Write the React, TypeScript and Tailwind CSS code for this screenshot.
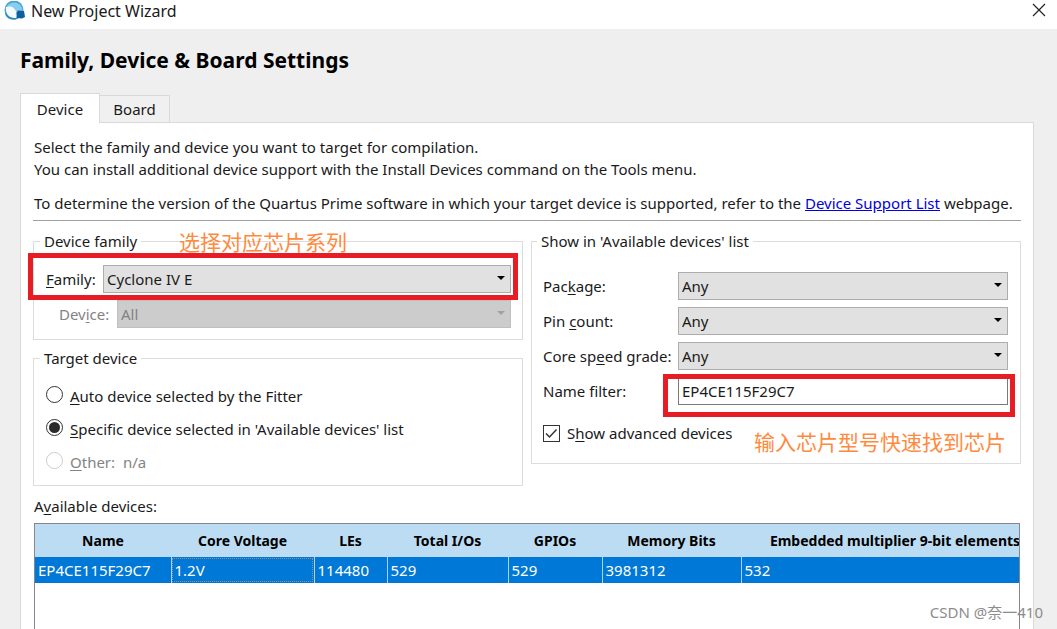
import { ReactNode, useState } from "react";

interface deviceType {
  name: string;
  voltage: string;
  les: string;
  ios: string;
  gpios: string;
  memory: string;
  multipliers: string;
}

interface selectBoxProps {
  id: string;
  value: string;
  disabled?: boolean;
}

interface radioProps {
  value: string;
  selected: string;
  onSelect: (value: string) => void;
  disabled?: boolean;
  children: ReactNode;
}

const devices: deviceType[] = [
  {
    name: "EP4CE115F29C7",
    voltage: "1.2V",
    les: "114480",
    ios: "529",
    gpios: "529",
    memory: "3981312",
    multipliers: "532",
  },
];

const columns: { key: keyof deviceType; title: string; width: string }[] = [
  { key: "name", title: "Name", width: "w-[136px]" },
  { key: "voltage", title: "Core Voltage", width: "w-[143px]" },
  { key: "les", title: "LEs", width: "w-[73px]" },
  { key: "ios", title: "Total I/Os", width: "w-[121px]" },
  { key: "gpios", title: "GPIOs", width: "w-[94px]" },
  { key: "memory", title: "Memory Bits", width: "w-[139px]" },
  {
    key: "multipliers",
    title: "Embedded multiplier 9-bit elements",
    width: "w-[308px]",
  },
];

/* Underlined shortcut letter */
const Key = ({ children }: { children: ReactNode }) => (
  <span className="underline underline-offset-2">{children}</span>
);

const SelectBox = ({ id, value, disabled }: selectBoxProps) => (
  <div className="relative min-w-0 flex-1">
    <select
      id={id}
      disabled={disabled}
      className="block h-7 w-full appearance-none border border-[#adadad] bg-[#e1e1e1] px-[3px] text-[#1a1a1a] disabled:border-[#bfbfbf] disabled:bg-[#cccccc] disabled:text-[#838383] disabled:opacity-100"
    >
      <option>{value}</option>
    </select>
    <svg
      viewBox="0 0 8 4"
      className={`pointer-events-none absolute right-[6px] top-[11px] h-1 w-2 ${
        disabled ? "fill-[#a0a0a0]" : "fill-black"
      }`}
    >
      <path d="M0 0h8L4 4z" />
    </svg>
  </div>
);

const Radio = ({
  value,
  selected,
  onSelect,
  disabled,
  children,
}: radioProps) => (
  <label
    className={`flex h-[33px] items-center gap-[7px] ${
      disabled ? "text-[#838383]" : ""
    }`}
  >
    <input
      type="radio"
      name="target"
      checked={selected === value}
      onChange={() => onSelect(value)}
      disabled={disabled}
      className="mb-[2px] size-[17px] shrink-0 appearance-none rounded-full border border-[#333333] bg-white p-[2px] bg-clip-content checked:bg-[#2b2b2b] disabled:border-[#cccccc]"
    />
    <span>{children}</span>
  </label>
);

const DeviceTable = () => (
  <div className="mt-[6px] flex-1 overflow-hidden border border-b-0 border-[#828790] bg-white">
    <table className="w-[1014px] table-fixed border-collapse">
      <thead>
        <tr className="h-[33px] bg-[#bcdcf4] text-black">
          {columns.map((column) => (
            <th
              key={column.key}
              className={`${column.width} p-0 text-center text-[14px] font-bold whitespace-nowrap`}
            >
              {column.title}
            </th>
          ))}
        </tr>
      </thead>
      <tbody>
        {devices.map((device) => (
          <tr key={device.name} className="h-[26px] bg-[#0078d7] text-white">
            {columns.map((column) => (
              <td
                key={column.key}
                className={`border-r border-[#a9d3f5] py-0 pr-0 pl-[3px] whitespace-nowrap ${
                  column.key === "voltage"
                    ? "outline-1 -outline-offset-2 outline-dotted outline-[#9c8f80]"
                    : ""
                }`}
              >
                {device[column.key]}
              </td>
            ))}
          </tr>
        ))}
      </tbody>
    </table>
  </div>
);

const App = () => {
  const [target, setTarget] = useState("specific");
  const [filter, setFilter] = useState("EP4CE115F29C7");
  const [advanced, setAdvanced] = useState(true);

  return (
    <div className="relative flex min-h-screen flex-col overflow-hidden bg-[#efefef] font-['Noto_Sans','Noto_Sans_CJK_SC',sans-serif] text-[15px] leading-[22px] text-[#1a1a1a]">
      {/* Title bar */}
      <header className="flex h-[29px] items-start justify-between bg-white pr-[11px] pl-1">
        <div className="flex items-center gap-[6px]">
          <svg viewBox="0 0 21 20" className="h-5 w-[21px]">
            <circle cx="10" cy="9" r="9.5" fill="#4aa3d4" />
            <path d="M3 5C6 1 13 0 17 5c1 2 2 4 1 6l-5 1C11 7 8 5 3 5z" fill="#86cdee" />
            <path d="M2 6c4-2 8 0 10 4 1 2 1 5 0 7C6 18 1 13 2 6z" fill="#f4fbff" />
            <path d="M1 11c2 5 6 6 11 6l1 1C7 20 1 17 1 11z" fill="#2c86bd" />
            <path d="M14 9.500l6 .5 1 6-3 1.500-5-.5-.5-5z" fill="#0d5f9e" />
          </svg>
          <span className="text-[16px]">New Project Wizard</span>
        </div>
        <button aria-label="Close" className="mt-[3px]">
          <svg viewBox="0 0 14 14" className="size-[14px] stroke-[#222222]">
            <path d="M1 1l12 12M13 1L1 13" fill="none" strokeWidth="1.2" />
          </svg>
        </button>
      </header>

      <main className="flex flex-1 flex-col pr-[23px] pl-5">
        <h1 className="mt-4 text-[21px] leading-[30px] font-bold text-black">
          Family, Device &amp; Board Settings
        </h1>

        <div role="tablist" className="mt-[18px] flex h-[29px] items-end">
          <button
            role="tab"
            aria-selected="true"
            className="relative z-10 -mb-px h-[30px] w-20 border border-b-0 border-[#d9d9d9] bg-white"
          >
            Device
          </button>
          <button
            role="tab"
            aria-selected="false"
            className="h-[27px] w-[70px] border border-b-0 border-l-0 border-[#d9d9d9] bg-[#f0f0f0]"
          >
            Board
          </button>
        </div>

        <section className="flex flex-1 flex-col border border-b-0 border-[#d9d9d9] bg-white px-3 pt-[13px]">
          <div className="pl-px whitespace-nowrap">
            <p>Select the family and device you want to target for compilation.</p>
            <p>
              You can install additional device support with the Install Devices
              command on the Tools menu.
            </p>
            <p className="mt-3">
              To determine the version of the Quartus Prime software in which
              your target device is supported, refer to the{" "}
              <a href="#devices" className="text-[#0000e0] underline">
                Device Support List
              </a>{" "}
              webpage.
            </p>
          </div>
          <hr className="mt-[6px] border-[#a0a0a0]" />

          <div className="mt-[10px] grid grid-cols-2 items-start gap-2">
            <div className="flex min-w-0 flex-col gap-2">
              <fieldset className="relative min-w-0 border border-[#dcdcdc] pt-[14px] pb-[11px] pr-[11px]">
                <legend className="ml-[6px] px-1 leading-5">
                  Device family
                </legend>
                <span className="absolute -top-[21px] left-[145px] text-[21px] leading-6 whitespace-nowrap text-[#ff8a3d]">
                  选择对应芯片系列
                </span>
                <div className="flex items-center pl-3">
                  <label htmlFor="family" className="w-[57px]">
                    <Key>F</Key>amily:
                  </label>
                  <SelectBox id="family" value="Cyclone IV E" />
                </div>
                <div className="mt-[7px] flex items-center pl-[25px]">
                  <label htmlFor="device" className="w-[58px] text-[#838383]">
                    Dev<Key>i</Key>ce:
                  </label>
                  <SelectBox id="device" value="All" disabled />
                </div>
                <div className="pointer-events-none absolute top-[2px] right-1 -left-[6px] h-[47px] border-5 border-[#e81c24]" />
              </fieldset>

              <fieldset className="min-w-0 border border-[#dcdcdc] pt-[11px] pb-[7px] pl-3">
                <legend className="-ml-[6px] px-1 leading-5">
                  Target device
                </legend>
                <Radio value="auto" selected={target} onSelect={setTarget}>
                  <Key>A</Key>uto device selected by the Fitter
                </Radio>
                <Radio value="specific" selected={target} onSelect={setTarget}>
                  <Key>S</Key>pecific device selected in 'Available devices'
                  list
                </Radio>
                <Radio
                  value="other"
                  selected={target}
                  onSelect={setTarget}
                  disabled
                >
                  <Key>O</Key>ther:&nbsp; n/a
                </Radio>
              </fieldset>
            </div>

            <fieldset className="relative min-w-0 border border-[#dcdcdc] pt-[21px] pr-3 pb-5 pl-[11px]">
              <legend className="-ml-[6px] px-1 leading-5">
                Show in 'Available devices' list
              </legend>
              <div className="flex flex-col gap-[7px] whitespace-nowrap">
                <div className="flex items-center">
                  <label htmlFor="package" className="w-[135px]">
                    Pac<Key>k</Key>age:
                  </label>
                  <SelectBox id="package" value="Any" />
                </div>
                <div className="flex items-center">
                  <label htmlFor="pins" className="w-[135px]">
                    Pin <Key>c</Key>ount:
                  </label>
                  <SelectBox id="pins" value="Any" />
                </div>
                <div className="flex items-center">
                  <label htmlFor="speed" className="w-[135px]">
                    Core sp<Key>e</Key>ed grade:
                  </label>
                  <SelectBox id="speed" value="Any" />
                </div>
                <div className="relative flex items-center">
                  <label htmlFor="filter" className="w-[135px]">
                    Name filter:
                  </label>
                  <input
                    id="filter"
                    type="text"
                    value={filter}
                    onChange={(e) => setFilter(e.target.value)}
                    className="h-7 min-w-0 flex-1 border border-[#7a7a7a] bg-white px-[3px]"
                  />
                  <div className="pointer-events-none absolute -top-[3px] -right-[7px] left-[120px] h-[43px] border-5 border-[#e81c24]" />
                </div>
              </div>
              <label className="mt-[18px] flex h-5 w-fit items-center gap-[7px]">
                <span className="relative size-[17px]">
                  <input
                    type="checkbox"
                    checked={advanced}
                    onChange={(e) => setAdvanced(e.target.checked)}
                    className="block size-[17px] appearance-none border border-[#333333] bg-white"
                  />
                  {advanced && (
                    <svg
                      viewBox="0 0 17 17"
                      className="pointer-events-none absolute inset-0 size-[17px] stroke-[#333333]"
                    >
                      <path
                        d="M3 8.5l3.500 3.500L13.500 4.500"
                        fill="none"
                        strokeWidth="1.5"
                      />
                    </svg>
                  )}
                </span>
                <span>
                  S<Key>h</Key>ow advanced devices
                </span>
              </label>
              <span className="absolute right-[14px] bottom-[9px] text-[21px] leading-6 whitespace-nowrap text-[#ff8a3d]">
                输入芯片型号快速找到芯片
              </span>
            </fieldset>
          </div>

          <div className="mx-px flex flex-1 flex-col pt-[9px]">
            <p>
              A<Key>v</Key>ailable devices:
            </p>
            <DeviceTable />
          </div>
        </section>
      </main>

      <span className="absolute right-[14px] bottom-[6px] text-[15px] leading-[22px] text-[#8c8c8c]">
        CSDN @奈一410
      </span>
    </div>
  );
};

export default App;
